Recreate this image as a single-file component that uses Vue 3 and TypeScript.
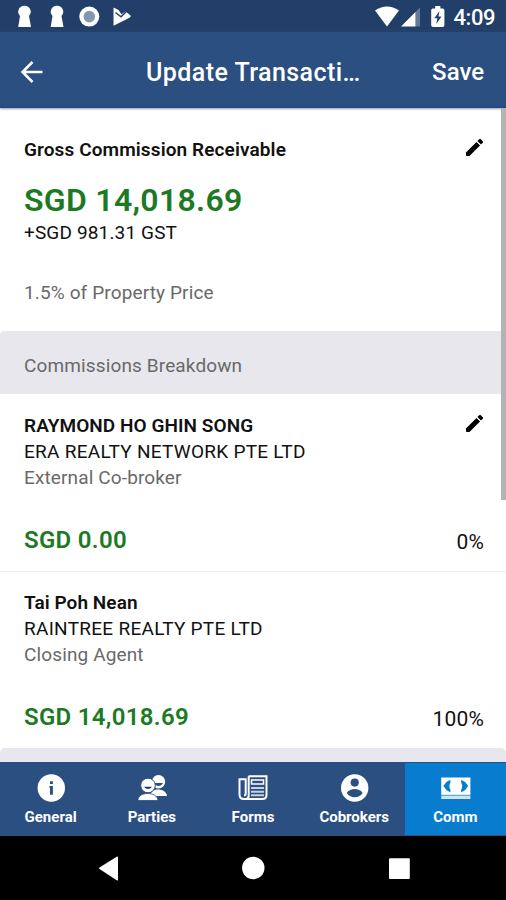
<script setup lang="ts">
interface Party {
  name: string
  company: string
  role: string
  amount: string
  share: string
  editable: boolean
  kind: string
}

const parties: Party[] = [
  { name: 'RAYMOND HO GHIN SONG', company: 'ERA REALTY NETWORK PTE LTD', role: 'External Co-broker', amount: 'SGD 0.00', share: '0%', editable: true, kind: 'external' },
  { name: 'Tai Poh Nean', company: 'RAINTREE REALTY PTE LTD', role: 'Closing Agent', amount: 'SGD 14,018.69', share: '100%', editable: false, kind: 'closing' },
]

const tabs: string[] = ['General', 'Parties', 'Forms', 'Cobrokers', 'Comm']
</script>

<template>
  <div class="screen">
    <div class="status">
      <svg class="status-left" width="140" height="32" viewBox="0 0 140 32" fill="#fff">
        <path d="M24.500 5.700a6 6 0 0 0-4.500 10.200L18.200 27h12.800l-2-11.100A6 6 0 0 0 24.500 5.700z" />
        <path d="M57 5.700a6 6 0 0 0-4.500 10.200L50.700 27h12.800l-2-11.100A6 6 0 0 0 57 5.700z" />
        <circle cx="89.300" cy="16.600" r="10" />
        <circle cx="89.300" cy="16.600" r="5.800" fill="#8397b0" />
        <path d="M113.500 7.500l5 2.400 3 4.300 4-2.700 2 1.600 3.500 3-1.500 1.700-16 8z" />
        <path d="M115.500 12.500l5.500 4.300 6-5.700" fill="none" stroke="#213f69" stroke-width="1.400" />
      </svg>
      <svg class="status-right" width="72" height="32" viewBox="374 0 72 32" fill="#fff">
        <path d="M375 10.500Q387 2.500 399 10.500L387 26.500z" />
        <path d="M401 26.500h14.500V12z" />
        <path d="M415.500 12l4.500-4.500v19h-4.500z" opacity=".3" />
        <path d="M433 8.500h2.200V6h5.200v2.500h2.200q1.800 0 1.800 1.800v14.900q0 1.800-1.800 1.800H433q-1.800 0-1.800-1.800V10.300q0-1.800 1.800-1.800z" />
        <path d="M439.500 11l-5.200 7.200h3L436.300 24l5.200-7.500h-3z" fill="#213f69" />
      </svg>
      <span class="clock">4:09</span>
    </div>
    <header class="bar">
      <svg class="back" width="24" height="24" viewBox="0 0 24 24" fill="none" stroke="#fff" stroke-width="2.500">
        <path d="M22.500 12H3M12.500 2L2.500 12l10 10" />
      </svg>
      <span class="title">Update Transacti…</span>
      <span class="save">Save</span>
    </header>
    <main class="content">
      <div class="thumb"></div>
      <section class="gross">
        <div class="row">
          <span class="name heading">Gross Commission Receivable</span>
          <svg class="pencil" width="19" height="19" viewBox="0 0 20 20">
            <path d="M1 15.300L12.100 4.200l3.700 3.700L4.700 19H2q-1 0-1-1zM13.100 3.200L15 1.300q.8-.8 1.600 0l2.100 2.100q.8.800 0 1.600L16.800 6.900z" />
          </svg>
        </div>
        <div class="total">SGD 14,018.69</div>
        <div class="gst">+SGD 981.31 GST</div>
        <div class="muted basis">1.5% of Property Price</div>
      </section>
      <div class="band"><span class="muted band-text">Commissions Breakdown</span></div>
      <section v-for="p in parties" :key="p.name" class="party" :class="p.kind">
        <div class="row">
          <span class="name">{{ p.name }}</span>
          <svg v-if="p.editable" class="pencil" width="19" height="19" viewBox="0 0 20 20">
            <path d="M1 15.300L12.100 4.200l3.700 3.700L4.700 19H2q-1 0-1-1zM13.100 3.200L15 1.300q.8-.8 1.600 0l2.100 2.100q.8.800 0 1.600L16.800 6.900z" />
          </svg>
        </div>
        <div class="company">{{ p.company }}</div>
        <div class="muted role">{{ p.role }}</div>
        <div class="row sum">
          <span class="amount">{{ p.amount }}</span>
          <span class="share">{{ p.share }}</span>
        </div>
      </section>
      <div class="tail"></div>
    </main>
    <nav class="tabs">
      <div v-for="(t, i) in tabs" :key="t" class="tab" :class="{ active: i === 4 }">
        <svg width="32" height="32" viewBox="0 0 32 32" fill="#fff">
          <g v-if="i === 0">
            <circle cx="16.300" cy="16" r="13.700" />
            <path d="M15 9.300h2.900V12H15zM14.500 14h3.400v8.700H15v-6.800h-.5z" fill="#2b4f81" />
          </g>
          <g v-else-if="i === 1">
            <circle cx="22.500" cy="9.800" r="6.700" />
            <path d="M14 24c1-5 4-6.500 8-6.500s8.500 2 9 6.500z" />
            <path d="M18 11h9q-1.500 3-4.500 3T18 11z" fill="#2b4f81" />
            <circle cx="12" cy="13.500" r="7.300" stroke="#2b4f81" stroke-width="1" />
            <path d="M1.800 28.500c.7-5 4.500-7 9.900-7s9.500 2 10.300 7z" stroke="#2b4f81" stroke-width=".8" />
            <path d="M8 14.700h8q-1.500 2.300-4 2.300t-4-2.300z" fill="#173b78" />
          </g>
          <g v-else-if="i === 2" fill="none" stroke="#fff" stroke-width="2">
            <path d="M11.500 4.300h18v18.700q0 4-4 4H7q-4.500 0-4.500-4.500V7.300h6.200v14q0 2.300-1.700 2.300" />
            <path d="M11.700 4.300v19.200q0 3-2.700 3.500" />
            <path d="M14.500 8h12v4h-12z" stroke-width="1.500" />
            <path d="M14 16h13M14 19.700h13M14 23.300h13" stroke-width="2" opacity=".75" />
          </g>
          <g v-else-if="i === 3">
            <circle cx="16.700" cy="16" r="13.700" />
            <circle cx="16.700" cy="10.600" r="4.100" fill="#2b4f81" />
            <path d="M8.700 21.100c2-3 5-4 8-4s6 1 8 4c-2 2.900-5 4.200-8 4.200s-6-1.300-8-4.200z" fill="#2b4f81" />
          </g>
          <g v-else transform="translate(.7 0)">
            <path d="M1.500 5.500h29.200v17.300H1.500z" />
            <path d="M1.500 24h29.200v3H1.500z" opacity=".8" />
            <path d="M1.500 22.300h29.200V24H1.500z" opacity=".35" />
            <path d="M10.700 7.700v3q-2 3.500 0 6.800v3l-4-2.500-3-4 3-4zM21.500 7.700v3q2 3.500 0 6.800v3l4-2.500 3-4-3-4z" fill="#087dd0" />
          </g>
        </svg>
        <span class="label">{{ t }}</span>
      </div>
    </nav>
    <footer class="system">
      <svg width="506" height="64" viewBox="0 0 506 64" fill="#fff">
        <path d="M118 21.500v22q0 1.500-1.300.7L99.500 33.100q-1.100-.8 0-1.600l17.200-10.700q1.300-.8 1.300.7z" />
        <circle cx="253.300" cy="32" r="11.200" />
        <rect x="389" y="22.300" width="20.800" height="20.800" rx="1" />
      </svg>
    </footer>
  </div>
</template>

<style>
body { margin: 0; overflow: hidden; background: #fff; }
</style>

<style scoped>
.screen { width: 506px; height: 900px; display: flex; flex-direction: column; overflow: hidden; background: #fff; color: #111; font-family: Roboto, sans-serif; }
svg { display: block; flex: none; }
span, div { white-space: nowrap; }
.status { height: 32px; flex: none; display: flex; background: linear-gradient(#213f69 29px, #25436d); color: #fff; }
.status-right { margin-left: 234px; }
.clock { margin-left: 7.500px; font-size: 22px; font-weight: 500; line-height: 35px; letter-spacing: -.4px; }
.bar { height: 76px; flex: none; display: flex; align-items: center; background: linear-gradient(#2b4f81 73px, #1b478a); color: #fff; box-shadow: 0 1px 2px rgba(0, 0, 0, .4); position: relative; z-index: 1; box-sizing: border-box; padding: 4px 22px 0 20px; }
.title { margin-left: 102px; font-size: 25px; font-weight: 500; letter-spacing: .44px; }
.save { margin-left: auto; font-size: 24px; font-weight: 500; }
.content { flex: 1; min-height: 0; position: relative; overflow: hidden; }
.thumb { position: absolute; right: 0; top: 0; width: 5px; height: 392px; background: #b3b3b3; z-index: 1; }
.gross { height: 223px; box-sizing: border-box; padding: 28px 22px 0 24px; }
.row { display: flex; justify-content: space-between; }
.name { font-size: 19px; font-weight: 600; line-height: 26px; letter-spacing: .06px; padding-top: 1px; }
.heading { letter-spacing: .11px; }
.pencil { margin-top: 1.500px; fill: #000; }
.total { margin-top: 18px; font-size: 32px; font-weight: 600; line-height: 38px; color: #1d7a24; letter-spacing: .3px; }
.gst { margin-top: 1px; font-size: 19px; line-height: 26px; letter-spacing: .15px; }
.muted { color: #696969; font-size: 19px; line-height: 26px; letter-spacing: .13px; }
.basis { margin-top: 34px; }
.band { height: 63px; box-sizing: border-box; padding: 22px 24px 0; background: #e8e7ed; border-top-left-radius: 4px; }
.party { height: 177px; box-sizing: border-box; padding: 18px 22px 0 24px; }
.party + .party { padding-top: 17px; border-top: 1px solid #f0f0f0; }
.company { font-size: 19px; line-height: 26px; letter-spacing: .28px; }
.sum { margin-top: 33px; align-items: baseline; }
.amount { font-size: 24px; font-weight: 600; line-height: 32px; color: #1d7a24; letter-spacing: .3px; }
.share { font-size: 21px; line-height: 32px; letter-spacing: .2px; position: relative; top: 1px; }
.tail { height: 14px; background: #e8e7ed; border-radius: 5px 5px 0 0; }
.tabs { height: 74px; flex: none; display: grid; grid-template-columns: repeat(5, 1fr); background: #2b4f81; }
.tab { display: flex; flex-direction: column; align-items: center; padding-top: 10px; }
.tab.active { background: #087dd0; margin: 1px 0; padding-top: 9px; }
.label { margin-top: 3px; color: #fff; font-size: 15px; font-weight: 700; line-height: 20px; }
.system { height: 64px; flex: none; background: #000; }
</style>
